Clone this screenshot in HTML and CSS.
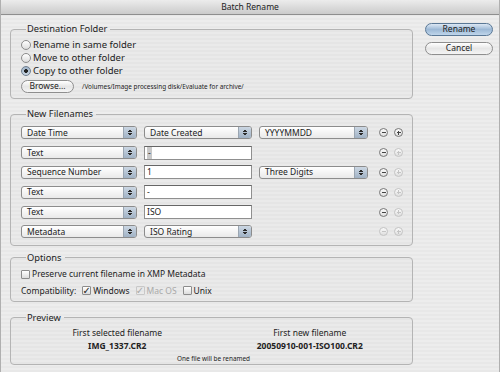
FILE: index.html
```html
<!doctype html>
<html lang="en">
<head>
    <meta charset="UTF-8">
    <title>Batch Rename</title>
    <link rel="stylesheet" href="styles.css">
</head>
<body>
<div class="window">
    <div class="titlebar">Batch Rename</div>

    <div class="window_body">
        <div class="main">
            <fieldset class="group group-dest">
                <legend>Destination Folder</legend>
                <div class="radio_row"><span class="radio"></span>Rename in same folder</div>
                <div class="radio_row"><span class="radio"></span>Move to other folder</div>
                <div class="radio_row"><span class="radio radio-on"></span>Copy to other folder</div>
                <div class="browse_row">
                    <span class="btn btn-browse">Browse...</span>
                    <span class="path">/Volumes/Image processing disk/Evaluate for archive/</span>
                </div>
            </fieldset>

            <fieldset class="group group-names">
                <legend>New Filenames</legend>

                <div class="name_row">
                    <div class="popup"><span>Date Time</span><i class="arrows"></i></div>
                    <div class="popup"><span>Date Created</span><i class="arrows"></i></div>
                    <div class="popup"><span>YYYYMMDD</span><i class="arrows"></i></div>
                    <span class="round minus"></span>
                    <span class="round plus"></span>
                </div>

                <div class="name_row">
                    <div class="popup"><span>Text</span><i class="arrows"></i></div>
                    <div class="field"><span class="sel">-</span></div>
                    <span class="round minus"></span>
                    <span class="round plus off"></span>
                </div>

                <div class="name_row">
                    <div class="popup"><span>Sequence Number</span><i class="arrows"></i></div>
                    <div class="field">1</div>
                    <div class="popup"><span>Three Digits</span><i class="arrows"></i></div>
                    <span class="round minus"></span>
                    <span class="round plus off"></span>
                </div>

                <div class="name_row">
                    <div class="popup"><span>Text</span><i class="arrows"></i></div>
                    <div class="field">-</div>
                    <span class="round minus"></span>
                    <span class="round plus off"></span>
                </div>

                <div class="name_row">
                    <div class="popup"><span>Text</span><i class="arrows"></i></div>
                    <div class="field">ISO</div>
                    <span class="round minus"></span>
                    <span class="round plus off"></span>
                </div>

                <div class="name_row">
                    <div class="popup"><span>Metadata</span><i class="arrows"></i></div>
                    <div class="popup"><span>ISO Rating</span><i class="arrows"></i></div>
                    <span class="round minus off"></span>
                    <span class="round plus off"></span>
                </div>
            </fieldset>

            <fieldset class="group group-options">
                <legend>Options</legend>
                <div class="check_row check_row-first"><span class="check"></span>Preserve current filename in XMP Metadata</div>
                <div class="check_row">
                    <span class="compat">Compatibility:</span>
                    <span class="check check-on">&#10003;</span><span class="opt">Windows</span>
                    <span class="check check-dim">&#10003;</span><span class="opt dim">Mac OS</span>
                    <span class="check"></span>Unix
                </div>
            </fieldset>

            <fieldset class="group group-preview">
                <legend>Preview</legend>
                <div class="preview">
                    <div class="preview_col">
                        <div>First selected filename</div>
                        <div class="fname">IMG_1337.CR2</div>
                    </div>
                    <div class="preview_col">
                        <div>First new filename</div>
                        <div class="fname">20050910-001-ISO100.CR2</div>
                    </div>
                </div>
                <div class="count">One file will be renamed</div>
            </fieldset>
        </div>

        <div class="side">
            <span class="btn btn-default">Rename</span>
            <span class="btn">Cancel</span>
        </div>
    </div>
</div>
</body>
</html>
```

FILE: styles.css
```css
body {
    margin: 0;
    padding: 0;
    font-family: "Noto Sans", "DejaVu Sans", sans-serif;
    font-size: 8.5px;
    line-height: 1.2;
    color: #222;
}

.window {
    width: 500px;
    height: 372px;
    overflow: hidden;
    background: repeating-linear-gradient(#ededed 0 2px, #e8e8e8 2px 4px);
    box-sizing: border-box;
    border-left: 1px solid #b0b0b0;
    border-right: 1px solid #b0b0b0;
}

.titlebar {
    height: 14px;
    line-height: 14px;
    text-align: center;
    font-size: 8.5px;
    background: linear-gradient(#ececec, #cbcbcb);
    border-bottom: 1px solid #8e8e8e;
}

.window_body {
    display: flex;
    padding: 0 6px 0 9px;
}

.main {
    width: 404px;
}

.side {
    display: flex;
    flex-direction: column;
    gap: 6px;
    margin-left: 12px;
    padding-top: 8px;
}

/* group boxes */
.group {
    margin: 0;
    border: 1px solid #b4b4b4;
    border-radius: 4px;
    padding: 0 10px;
    background: rgba(0, 0, 0, 0.012);
}

.group legend {
    margin-left: 5px;
    padding: 0 3px 0 1px;
    font-size: 9.3px;
    line-height: 10px;
}

.group-dest {
    margin-top: 9px;
    padding-top: 4px;
    padding-bottom: 5px;
}

.group-names {
    margin-top: 10px;
    padding-top: 4px;
    padding-bottom: 3px;
}

.group-options {
    margin-top: 7px;
    padding-top: 4px;
    padding-bottom: 1px;
}

.group-preview {
    margin-top: 11px;
    padding: 5px 6px 1px 10px;
}

/* radios */
.radio_row {
    display: flex;
    align-items: center;
    height: 13px;
    gap: 2px;
    font-size: 9.5px;
}

.radio {
    width: 8px;
    height: 8px;
    border: 1px solid #8c8c8c;
    border-radius: 50%;
    background: linear-gradient(#ffffff, #dcdcdc);
}

.radio-on {
    background: radial-gradient(circle, #222 0 1.6px, transparent 2.2px), linear-gradient(#9fb3c8, #c9d5e2);
    border-color: #6f7f90;
}

.browse_row {
    display: flex;
    align-items: center;
    gap: 8px;
    margin-top: 3px;
}

.path {
    font-size: 6.4px;
}

/* buttons */
.btn {
    display: inline-flex;
    align-items: center;
    justify-content: center;
    box-sizing: border-box;
    height: 13px;
    border: 1px solid #8e8e8e;
    border-radius: 7px;
    background: linear-gradient(#ffffff, #e6e6e6 50%, #f4f4f4);
}

.btn-browse {
    width: 53px;
}

.side .btn {
    width: 68px;
}

.btn-default {
    border-color: #5a7896;
    background: linear-gradient(#dce8f4, #9db9d6 50%, #bfd5ea);
}

/* filename rows */
.name_row {
    display: grid;
    grid-template-columns: 116px 108px 109px 9px 9px;
    column-gap: 7px;
    align-items: center;
    height: 19.8px;
}

.popup {
    display: flex;
    align-items: center;
    box-sizing: border-box;
    height: 13px;
    border: 1px solid #8c8c8c;
    border-radius: 3px;
    background: linear-gradient(#ffffff, #e9e9e9);
    overflow: hidden;
}

.popup span {
    flex: 1;
    padding-left: 5px;
}

.arrows {
    align-self: stretch;
    width: 12px;
    border-left: 1px solid #9aa5b1;
    background:
        linear-gradient(to bottom right, transparent 49%, #2b2b2b 51%) 4px 2px / 2px 3px no-repeat,
        linear-gradient(to bottom left, transparent 49%, #2b2b2b 51%) 6px 2px / 2px 3px no-repeat,
        linear-gradient(to top right, transparent 49%, #2b2b2b 51%) 4px 6px / 2px 3px no-repeat,
        linear-gradient(to top left, transparent 49%, #2b2b2b 51%) 6px 6px / 2px 3px no-repeat,
        linear-gradient(#ccd7e3, #a0b2c5);
}

.field {
    display: flex;
    align-items: center;
    box-sizing: border-box;
    height: 14px;
    padding-left: 2px;
    border: 1px solid #8f8f8f;
    border-top-color: #666;
    background: #fff;
}

.sel {
    background: #c9c9c9;
    padding: 0 1px;
    line-height: 12px;
}

.round {
    position: relative;
    box-sizing: border-box;
    width: 9px;
    height: 9px;
    border: 1px solid #777;
    border-radius: 50%;
    background: linear-gradient(#fafafa, #dedede);
}

.minus {
    grid-column: 4;
    margin-left: 4px;
}

.plus {
    grid-column: 5;
    margin-left: 3px;
}

.round::before,
.plus::after {
    content: "";
    position: absolute;
    left: 1.5px;
    top: 3px;
    width: 4px;
    height: 1px;
    background: #444;
}

.plus::after {
    left: 3px;
    top: 1.5px;
    width: 1px;
    height: 4px;
}

.round.off {
    border-color: #c4c4c4;
}

.round.off::before,
.round.off::after {
    background: #c4c4c4;
}

/* options */
.check_row {
    display: flex;
    align-items: center;
    height: 18px;
}

.check_row-first {
    height: 15px;
}

.check {
    display: inline-flex;
    align-items: center;
    justify-content: center;
    box-sizing: border-box;
    width: 9px;
    height: 9px;
    margin-right: 2px;
    border: 1px solid #8c8c8c;
    border-radius: 1px;
    background: linear-gradient(#ffffff, #dcdcdc);
    font-family: "DejaVu Sans", sans-serif;
    font-size: 10px;
    font-weight: bold;
    line-height: 9px;
    color: #1e1e1e;
}

.compat {
    margin-right: 6px;
}

.opt {
    margin-right: 6px;
}

.check-dim {
    border-color: #c8c8c8;
    color: #a9a9a9;
    background: none;
    font-weight: normal;
}

.dim {
    color: #a9a9a9;
}

/* preview */
.preview {
    display: grid;
    grid-template-columns: 1fr 1fr;
    text-align: center;
}

.fname {
    margin-top: 3px;
    font-weight: bold;
}

.count {
    margin-top: 4px;
    text-align: center;
    font-size: 6.4px;
}
```
